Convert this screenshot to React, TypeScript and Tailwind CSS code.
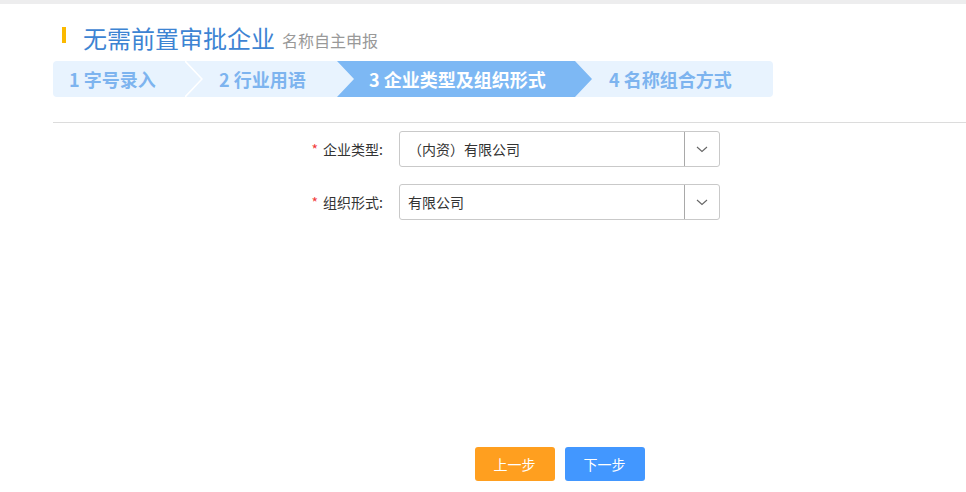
import React from 'react';

const font = { fontFamily: '"Microsoft YaHei", "Noto Sans CJK SC", "Noto Sans", sans-serif' };

const Chevron: React.FC = () => (
  <svg className="absolute left-full top-0 h-full w-[18px] z-10" viewBox="0 0 18 36" fill="none">
    <polyline points="0,0 17,18 0,36" stroke="#ffffff" strokeWidth="1.6" />
  </svg>
);

const SelectBox: React.FC<{ value: string }> = ({ value }) => (
  <div className="flex h-[36px] w-[321px] items-stretch rounded-[3px] border border-[#c9c9c9] bg-white">
    <div className="flex flex-1 items-center pl-2 text-[14px] text-[#333]">{value}</div>
    <div className="flex w-[35px] items-center justify-center border-l border-[#a9a9a9]">
      <svg width="12" height="7" viewBox="0 0 12 7" fill="none">
        <polyline points="1,1 6,5.5 11,1" stroke="#666" strokeWidth="1.1" />
      </svg>
    </div>
  </div>
);

const FormRow: React.FC<{ label: string; value: string }> = ({ label, value }) => (
  <div className="flex items-center">
    <div className="w-[330px] pr-0 text-right text-[14px] text-[#333]">
      <span className="mr-[5px] text-[#f23b3b]">*</span>
      {label}
    </div>
    <div className="ml-[16px]">
      <SelectBox value={value} />
    </div>
  </div>
);

export default function App() {
  return (
    <div className="h-[492px] w-full overflow-hidden bg-white" style={font}>
      <div className="h-[4px] bg-[#ededee]" />
      <div className="pl-[53px]">
        <div className="mt-[20px] flex h-[28px] items-center">
          <div className="ml-[9px] mb-[7px] h-[16px] w-[4px] bg-[#fbb900]" />
          <span className="ml-[17px] text-[24px] leading-[28px] text-[#3d84d3]">无需前置审批企业</span>
          <span className="ml-[7px] mt-[4px] text-[16px] leading-[28px] text-[#999]">名称自主申报</span>
        </div>

        <div className="mt-[9px] flex h-[36px] w-[720px] overflow-hidden rounded-[4px] bg-[#e8f3fe] text-[18px] font-bold leading-[36px]">
          <div className="relative w-[132px] shrink-0 pl-[16px] text-[#7db4ef]">
            1 字号录入
            <Chevron />
          </div>
          <div className="relative w-[152px] shrink-0 pl-[34px] text-[#7db4ef]">
            2 行业用语
          </div>
          <div className="relative z-20 -mr-[17px] w-[255px] shrink-0 bg-[#7db8f4] pl-[32px] text-white [clip-path:polygon(0_0,calc(100%-17px)_0,100%_50%,calc(100%-17px)_100%,0_100%,17px_50%)]">
            3 企业类型及组织形式
          </div>
          <div className="flex-1 pl-[34px] text-[#7db4ef]">4 名称组合方式</div>
        </div>

        <div className="mt-[25px] h-px bg-[#dcdcdc]" />

        <div className="mt-[8px] flex flex-col gap-[17px]">
          <FormRow label="企业类型:" value="（内资）有限公司" />
          <FormRow label="组织形式:" value="有限公司" />
        </div>

        <div className="mt-[227px] flex">
          <div className="ml-[346px] flex w-[321px] justify-center gap-[10px]">
            <button className="h-[34px] w-[80px] rounded-[3px] bg-[#ff9f1f] text-[14px] text-white">上一步</button>
            <button className="h-[34px] w-[80px] rounded-[3px] bg-[#4297ff] text-[14px] text-white">下一步</button>
          </div>
        </div>
      </div>
    </div>
  );
}
